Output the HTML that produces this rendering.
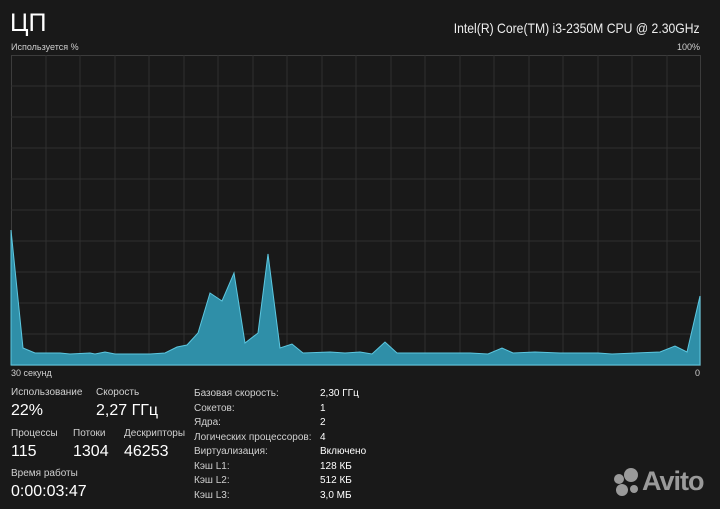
<!DOCTYPE html>
<html><head><meta charset="utf-8"><style>
body{margin:0;width:720px;height:509px;background:#191919;color:#fff;font-family:"Liberation Sans",sans-serif;position:relative;overflow:hidden}
.a{position:absolute;white-space:nowrap}
.s{font-size:10px;color:#cfcfcf}
.l{font-size:10px;color:#d0d0d0}
.v{font-size:16px;color:#fff}
</style></head><body>
<div class="a" style="left:10px;top:9px;font-size:25px;font-weight:300">ЦП</div>
<div class="a" style="right:20px;top:20px;font-size:14px;color:#eee;transform:scaleX(0.87);transform-origin:right top">Intel(R) Core(TM) i3-2350M CPU @ 2.30GHz</div>
<div class="a s" style="left:11px;top:42px;font-size:9px">Используется %</div>
<div class="a s" style="right:20px;top:42px;font-size:9px">100%</div>
<svg class="a" style="left:0;top:0" width="720" height="380">
<g stroke="#303030" stroke-width="1">
<rect x="11.5" y="55.5" width="689" height="310" fill="none" stroke="#3c3c3c"/>
<path d="M46 55V365M80 55V365M115 55V365M149 55V365M184 55V365M218 55V365M253 55V365M287 55V365M322 55V365M356 55V365M391 55V365M425 55V365M460 55V365M494 55V365M529 55V365M563 55V365M598 55V365M632 55V365M667 55V365M11 86H700M11 117H700M11 148H700M11 179H700M11 210H700M11 241H700M11 272H700M11 303H700M11 334H700"/>
</g>
<polygon fill="#2f8fa8" stroke="#5cc7e0" stroke-width="1" points="11,230 23,348 35,353 60,353 70,354 90,353 95,354 105,352 115,354 150,354 165,353 177,347 187,345 198,333 210,293 222,301 234,273 245,343 258,333 268,254 280,348 292,344 303,353 330,352 345,353 360,352 372,354 385,342 397,353 420,353 470,353 488,354 502,348 513,353 535,352 560,353 598,353 612,354 660,352 675,346 687,352 700,296 700,365 11,365"/>
</svg>
<div class="a s" style="left:11px;top:368px;font-size:9px">30 секунд</div>
<div class="a s" style="right:20px;top:368px;font-size:9px">0</div>
<div class="a l" style="left:11px;top:387px">Использование</div>
<div class="a l" style="left:96px;top:387px">Скорость</div>
<div class="a v" style="left:11px;top:402px">22%</div>
<div class="a v" style="left:96px;top:402px">2,27 ГГц</div>
<div class="a l" style="left:11px;top:428px">Процессы</div>
<div class="a l" style="left:73px;top:428px">Потоки</div>
<div class="a l" style="left:124px;top:428px">Дескрипторы</div>
<div class="a v" style="left:11px;top:443px">115</div>
<div class="a v" style="left:73px;top:443px">1304</div>
<div class="a v" style="left:124px;top:443px">46253</div>
<div class="a l" style="left:11px;top:468px">Время работы</div>
<div class="a v" style="left:11px;top:483px">0:00:03:47</div>
<div class="a l" style="left:194px;top:387px;line-height:14.5px">Базовая скорость:<br>Сокетов:<br>Ядра:<br>Логических процессоров:<br>Виртуализация:<br>Кэш L1:<br>Кэш L2:<br>Кэш L3:</div>
<div class="a l" style="left:320px;top:387px;line-height:14.5px;color:#fff">2,30 ГГц<br>1<br>2<br>4<br>Включено<br>128 КБ<br>512 КБ<br>3,0 МБ</div>
<svg class="a" style="left:612px;top:467px" width="32" height="30"><g fill="#9a9a9a"><circle cx="19" cy="8" r="7"/><circle cx="7" cy="12" r="5"/><circle cx="10" cy="23" r="6"/><circle cx="22" cy="22" r="4"/></g></svg>
<div class="a" style="left:642px;top:466px;font-size:27px;font-weight:bold;color:#9a9a9a;letter-spacing:-1px">Avito</div>
</body></html>
